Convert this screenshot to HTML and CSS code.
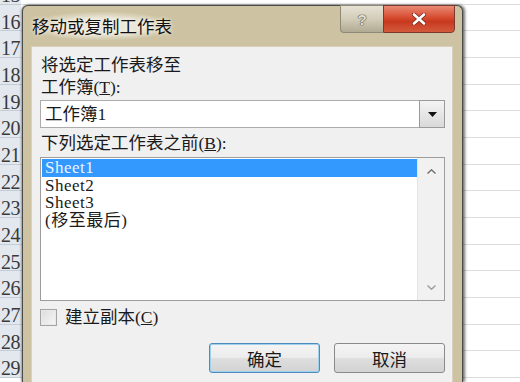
FILE: index.html
```html
<!DOCTYPE html>
<html lang="zh-CN">
<head>
<meta charset="utf-8">
<title>移动或复制工作表</title>
<link rel="stylesheet" href="styles.css">
</head>
<body>
<div class="sheet">
  <div class="row first"><div class="rh">15</div><div class="cells"></div></div>
  <div class="row"><div class="rh">16</div><div class="cells"></div></div>
  <div class="row"><div class="rh">17</div><div class="cells"></div></div>
  <div class="row"><div class="rh">18</div><div class="cells"></div></div>
  <div class="row"><div class="rh">19</div><div class="cells"></div></div>
  <div class="row"><div class="rh">20</div><div class="cells"></div></div>
  <div class="row"><div class="rh">21</div><div class="cells"></div></div>
  <div class="row"><div class="rh">22</div><div class="cells"></div></div>
  <div class="row"><div class="rh">23</div><div class="cells"></div></div>
  <div class="row"><div class="rh">24</div><div class="cells"></div></div>
  <div class="row"><div class="rh">25</div><div class="cells"></div></div>
  <div class="row"><div class="rh">26</div><div class="cells"></div></div>
  <div class="row"><div class="rh">27</div><div class="cells"></div></div>
  <div class="row"><div class="rh">28</div><div class="cells"></div></div>
  <div class="row"><div class="rh">29</div><div class="cells"></div></div>
</div>

<div class="dialog">
  <div class="titlebar">
    <div class="title">移动或复制工作表</div>
    <div class="caption-btns">
      <div class="cbtn help">?</div>
      <div class="cbtn close">
        <svg width="14" height="12" viewBox="0 0 14 12"><path d="M2 1.5 L12 10.5 M12 1.5 L2 10.5" stroke="#7a2a1c" stroke-width="4.2" stroke-linecap="round"/><path d="M2 1.5 L12 10.5 M12 1.5 L2 10.5" stroke="#ffffff" stroke-width="2.6" stroke-linecap="round"/></svg>
      </div>
    </div>
  </div>
  <div class="client">
    <div class="label l1">将选定工作表移至</div>
    <div class="label">工作簿(<u>T</u>):</div>
    <div class="combo">
      <div class="combo-text">工作簿1</div>
      <div class="combo-btn"><svg width="9" height="5" viewBox="0 0 9 5"><path d="M0 0 H9 L4.5 5 Z" fill="#111"/></svg></div>
    </div>
    <div class="label l3">下列选定工作表之前(<u>B</u>):</div>
    <div class="listbox">
      <div class="items">
        <div class="item sel">Sheet1</div>
        <div class="item">Sheet2</div>
        <div class="item">Sheet3</div>
        <div class="item">(移至最后)</div>
      </div>
      <div class="vscroll">
        <div class="sarrow"><svg width="9" height="5" viewBox="0 0 9 5"><path d="M0.5 4.5 L4.5 0.8 L8.5 4.5" fill="none" stroke="#6d6d6d" stroke-width="1.4"/></svg></div>
        <div class="sarrow"><svg width="9" height="5" viewBox="0 0 9 5"><path d="M0.5 0.5 L4.5 4.2 L8.5 0.5" fill="none" stroke="#9a9a9a" stroke-width="1.4"/></svg></div>
      </div>
    </div>
    <div class="check-row">
      <div class="checkbox"></div>
      <div class="check-label">建立副本(<u>C</u>)</div>
    </div>
    <div class="buttons">
      <div class="btn default">确定</div>
      <div class="btn">取消</div>
    </div>
  </div>
</div>
</body>
</html>
```

FILE: styles.css
```css
html, body {
  margin: 0;
  padding: 0;
}
body {
  width: 520px;
  height: 382px;
  overflow: hidden;
  background: #ffffff;
  position: relative;
  font-family: "Liberation Serif", "Noto Sans CJK SC", serif;
}

/* spreadsheet behind */
.sheet {
  display: flex;
  flex-direction: column;
  height: 382px;
  overflow: hidden;
}
.row {
  display: flex;
  height: 26.7px;
  flex: none;
}
.row.first {
  margin-top: -22.2px;
}
.rh {
  width: 21px;
  box-sizing: border-box;
  background: #e3e8ee;
  border-bottom: 1px solid #c3ccd7;
  color: #3a3a3a;
  font-size: 20px;
  line-height: 22px;
  padding-top: 6px;
  text-align: center;
  overflow: hidden;
  letter-spacing: -0.5px;
}
.cells {
  flex: 1;
  border-bottom: 1px solid #dcdcdc;
  box-sizing: border-box;
}

/* dialog window */
.dialog {
  position: absolute;
  left: 22px;
  top: 5px;
  width: 441px;
  height: 377px;
  box-sizing: border-box;
  border: 1px solid #4a4a48;
  border-bottom: none;
  border-radius: 6px 6px 0 0;
  background: #cdc3a2;
  box-shadow: 2px 0 3px rgba(0, 0, 0, 0.55), -1px 0 2px rgba(0, 0, 0, 0.4);
  display: flex;
  flex-direction: column;
}
.titlebar {
  height: 40px;
  flex: none;
  display: flex;
  align-items: center;
  justify-content: space-between;
}
.title {
  margin-left: 9px;
  font-family: "Noto Sans CJK SC", sans-serif;
  font-size: 17.5px;
  line-height: 24px;
  color: #111;
  padding: 2px 0;
  background: radial-gradient(ellipse at center, rgba(236, 232, 218, 0.95) 40%, rgba(205, 195, 162, 0) 75%);
  text-shadow: 0 0 4px rgba(255, 255, 255, 0.9);
}
.caption-btns {
  align-self: flex-start;
  margin-top: -1px;
  margin-right: 7px;
  display: flex;
  height: 28px;
}
.cbtn {
  height: 28px;
  box-sizing: border-box;
  display: flex;
  align-items: center;
  justify-content: center;
}
.help {
  width: 43px;
  border: 1px solid #8f8a78;
  border-right: none;
  border-radius: 0 0 0 4px;
  background: linear-gradient(#e6e2d4, #d2ccb8 50%, #b1aa93);
  font-family: "Liberation Sans", sans-serif;
  font-weight: bold;
  font-size: 15px;
  color: #e3e0d4;
  text-shadow: 0 0 1px #4a473f, 0 0 1px #4a473f, 0 0 1px #4a473f;
}
.close {
  width: 72px;
  border: 1px solid #7d3a2c;
  border-radius: 0 0 4px 0;
  background: linear-gradient(#e98a74, #d64b30 45%, #c8391f 60%, #d35a3b);
}

/* client area */
.client {
  flex: 1;
  margin: 0 9px 0 8px;
  background: #f0f0f0;
  border: 1px solid #d8d1bb;
  border-bottom: none;
  padding: 7px 7px 0 8px;
  display: flex;
  flex-direction: column;
  color: #1a1a1a;
  font-size: 17.5px;
  overflow: hidden;
}
.label {
  height: 22px;
  line-height: 22px;
  padding-left: 1px;
  white-space: nowrap;
}
.combo {
  margin-top: 2px;
  height: 28px;
  flex: none;
  box-sizing: border-box;
  border: 1px solid #acacac;
  background: #fff;
  display: flex;
}
.combo-text {
  flex: 1;
  padding-left: 4px;
  line-height: 26px;
}
.combo-btn {
  width: 26px;
  margin: -1px -1px -1px 0;
  box-sizing: border-box;
  border: 1px solid #9a9a9a;
  background: linear-gradient(#f4f4f4, #e6e6e6 50%, #d9d9d9);
  display: flex;
  align-items: center;
  justify-content: center;
}
.l3 {
  margin-top: 4px;
}
.listbox {
  margin-top: 3px;
  height: 144px;
  flex: none;
  box-sizing: border-box;
  border: 1px solid #9d9d9d;
  background: #fff;
  display: flex;
  padding: 1px 0 0 1px;
}
.items {
  flex: 1;
}
.item {
  height: 17.5px;
  line-height: 17.5px;
  padding-left: 3px;
  letter-spacing: 0.5px;
  font-size: 17px;
  white-space: nowrap;
  overflow: hidden;
}
.item.sel {
  background: #3399ff;
  color: #eaf4ff;
}
.vscroll {
  width: 26px;
  margin-top: -1px;
  background: #f1f1f1;
  border-left: 1px solid #e4e4e4;
  display: flex;
  flex-direction: column;
  justify-content: space-between;
}
.sarrow {
  height: 26px;
  display: flex;
  align-items: center;
  justify-content: center;
}
.check-row {
  margin-top: 5px;
  height: 22px;
  flex: none;
  display: flex;
  align-items: center;
}
.checkbox {
  width: 17px;
  height: 17px;
  box-sizing: border-box;
  border: 1px solid #a3a3a3;
  background: linear-gradient(135deg, #dcdcdc, #f6f6f6);
  box-shadow: inset 0 0 0 1px #e9e9e9;
}
.check-label {
  margin-left: 8px;
  line-height: 22px;
}
.buttons {
  margin-top: 15px;
  flex: none;
  display: flex;
  justify-content: flex-end;
  gap: 14px;
}
.btn {
  width: 111px;
  height: 30px;
  box-sizing: border-box;
  border: 1px solid #8a8a8a;
  border-radius: 3px;
  background: linear-gradient(#f4f4f4, #ececec 48%, #dedede 52%, #d3d3d3);
  display: flex;
  align-items: center;
  justify-content: center;
  font-size: 17.5px;
  color: #1a1a1a;
}
.btn.default {
  border-color: #4e8bbd;
  box-shadow: inset 0 0 0 1px #9fd0ec;
}
```
